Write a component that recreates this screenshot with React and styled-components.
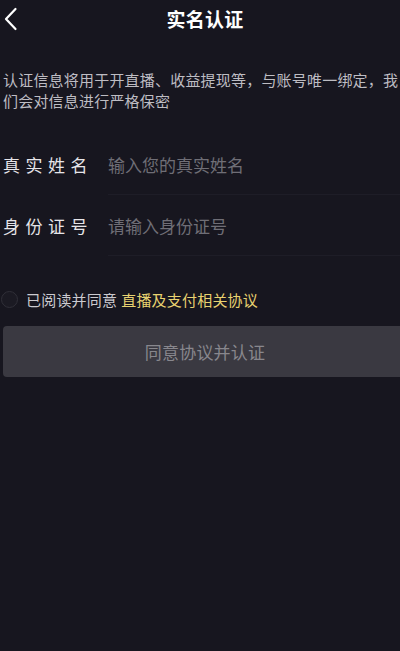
import styled, { createGlobalStyle } from 'styled-components';

const GlobalStyle = createGlobalStyle`
  html, body {
    margin: 0;
    padding: 0;
    background: #17161f;
  }
  body {
    font-family: "Noto Sans CJK SC", "Noto Sans", sans-serif;
    overflow: hidden;
  }
`;

const Page = styled.div`
  width: 400px;
  height: 651px;
  background: #17161f;
  overflow: hidden;
`;

const Header = styled.header`
  height: 38px;
  display: grid;
  grid-template-columns: 40px 1fr 30px;
  align-items: center;
`;

const BackButton = styled.button`
  border: 0;
  background: none;
  padding: 0 0 0 4px;
  height: 38px;
  display: flex;
  align-items: center;
  cursor: pointer;
`;

const Title = styled.h1`
  margin: 0;
  text-align: center;
  font-size: 19px;
  line-height: 24px;
  font-weight: 700;
  color: #ffffff;
  letter-spacing: 0.3px;
`;

const Content = styled.main`
  padding: 0 0 0 3px;
`;

const Notice = styled.p`
  margin: 31px 0 0;
  font-size: 15px;
  line-height: 21px;
  letter-spacing: 0.2px;
  color: #bebdc3;
`;

const Form = styled.div`
  margin-top: 23px;
`;

const Row = styled.label`
  display: flex;
  align-items: stretch;
  height: 61px;
`;

const Label = styled.span`
  width: 105px;
  flex-shrink: 0;
  display: flex;
  align-items: center;
  font-size: 17px;
  letter-spacing: 5.5px;
  color: #e6e5e9;
`;

const Field = styled.input`
  flex: 1;
  min-width: 0;
  border: 0;
  border-bottom: 1px solid #1e1d27;
  background: transparent;
  padding: 0;
  font-family: inherit;
  font-size: 17px;
  color: #e6e5e9;
  outline: none;

  &::placeholder {
    color: #6f6e76;
  }
`;

const Agreement = styled.div`
  margin-top: 33px;
  height: 20px;
  display: flex;
  align-items: center;
  gap: 8px;
  margin-left: -2px;
`;

const Radio = styled.span`
  width: 15px;
  height: 15px;
  border-radius: 50%;
  border: 1px solid #302f38;
  background: #1b1a23;
  flex-shrink: 0;
`;

const AgreeText = styled.span`
  font-size: 15px;
  color: #cbcacf;
  letter-spacing: 0.2px;
  white-space: nowrap;
`;

const Link = styled.a`
  color: #e8d270;
  text-decoration: none;
  margin-left: 4px;
`;

const SubmitButton = styled.button`
  margin-top: 17px;
  width: calc(100% + 7px);
  height: 51px;
  border: 0;
  border-radius: 4px;
  background: #3a3941;
  color: #88878d;
  font-family: inherit;
  font-size: 17px;
  letter-spacing: 0.2px;
  cursor: not-allowed;
`;

const ChevronLeft = () => (
  <svg width="14" height="24" viewBox="0 0 14 24" fill="none">
    <polyline
      points="11.5,2 2,12 11.5,22"
      stroke="#ffffff"
      strokeWidth="2.2"
      strokeLinecap="round"
      strokeLinejoin="round"
    />
  </svg>
);

export default function App() {
  return (
    <Page>
      <GlobalStyle />
      <Header>
        <BackButton aria-label="返回">
          <ChevronLeft />
        </BackButton>
        <Title>实名认证</Title>
        <span />
      </Header>

      <Content>
        <Notice>
          认证信息将用于开直播、收益提现等，与账号唯一绑定，我们会对信息进行严格保密
        </Notice>

        <Form>
          <Row>
            <Label>真实姓名</Label>
            <Field placeholder="输入您的真实姓名" />
          </Row>
          <Row>
            <Label>身份证号</Label>
            <Field placeholder="请输入身份证号" />
          </Row>
        </Form>

        <Agreement>
          <Radio />
          <AgreeText>
            已阅读并同意<Link href="#">直播及支付相关协议</Link>
          </AgreeText>
        </Agreement>

        <SubmitButton disabled>同意协议并认证</SubmitButton>
      </Content>
    </Page>
  );
}
